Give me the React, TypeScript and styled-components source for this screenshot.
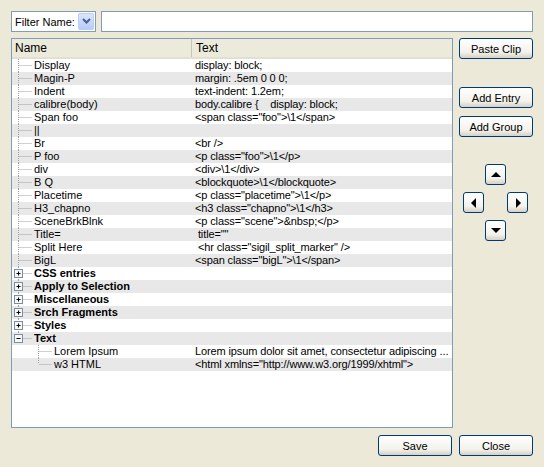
import styled, { createGlobalStyle } from "styled-components";

const GlobalStyle = createGlobalStyle`
  html, body {
    margin: 0;
    padding: 0;
    background: #ece9d8;
  }
  body {
    font-family: "Liberation Sans", Arial, sans-serif;
    font-size: 11px;
    color: #000;
  }
`;

const Page = styled.div`
  width: 544px;
  height: 467px;
  box-sizing: border-box;
  padding: 11px 11px 0 11px;
  display: flex;
  flex-direction: column;
`;

const FilterBar = styled.div`
  display: flex;
  gap: 5px;
  height: 21px;
  margin-bottom: 6px;
`;

const Combo = styled.div`
  width: 85px;
  box-sizing: border-box;
  border: 1px solid #7f9db9;
  background: #fff;
  display: flex;
  align-items: center;
  justify-content: space-between;
  padding: 0 1px 0 3px;
`;

const ComboButton = styled.div`
  width: 16px;
  height: 17px;
  box-sizing: border-box;
  border: 1px solid #b9cdf6;
  border-radius: 2px;
  background: linear-gradient(#dbe6fd, #b6cbf9);
  display: flex;
  align-items: center;
  justify-content: center;
`;

const TextField = styled.input`
  flex: 1;
  box-sizing: border-box;
  border: 1px solid #7f9db9;
  background: #fff;
  outline: none;
  font: inherit;
`;

const Middle = styled.div`
  display: flex;
  gap: 6px;
  height: 390px;
`;

const Tree = styled.div`
  width: 442px;
  box-sizing: border-box;
  border: 1px solid #7f9db9;
  background: #fff;
  display: flex;
  flex-direction: column;
  overflow: hidden;
`;

const Header = styled.div`
  height: 20px;
  display: grid;
  grid-template-columns: 179px 1fr;
  background: #ebeadb;
  border-bottom: 2px solid #e2e0d0;
  box-sizing: border-box;
`;

const HeadCell = styled.div<{ $divider?: boolean }>`
  display: flex;
  align-items: center;
  padding-left: ${({ $divider }) => ($divider ? "4px" : "3px")};
  border-left: ${({ $divider }) => ($divider ? "1px solid #c7c5b2" : "none")};
  font-size: 12px;
`;

const Row = styled.div<{ $shade: boolean }>`
  height: 13px;
  display: grid;
  grid-template-columns: 179px 1fr;
  background: ${({ $shade }) => ($shade ? "#e8e8e8" : "#fff")};
  line-height: 13px;
  white-space: pre;
`;

const NameCell = styled.div<{ $bold?: boolean }>`
  display: flex;
  align-items: center;
  font-weight: ${({ $bold }) => ($bold ? "bold" : "normal")};
  overflow: hidden;
`;

const ValueCell = styled.div`
  padding-left: 4px;
  letter-spacing: -0.12px;
  overflow: hidden;
`;

const Side = styled.div`
  width: 74px;
  display: flex;
  flex-direction: column;
`;

const Button = styled.button<{ $gap?: number }>`
  width: 74px;
  height: 21px;
  margin-top: ${({ $gap }) => $gap ?? 0}px;
  box-sizing: border-box;
  border: 1px solid #003c74;
  border-radius: 3px;
  background: linear-gradient(#ffffff, #f3f2ec 70%, #d6d0c5);
  font-family: "Liberation Sans", Arial, sans-serif;
  font-size: 11px;
  color: #000;
  padding: 0;
`;

const Pad = styled.div`
  margin: 27px 0 0 4px;
  display: grid;
  grid-template-columns: 21px 21px 21px;
  grid-template-rows: 21px 21px 21px;
  column-gap: 1px;
  row-gap: 7px;
`;

const ArrowButton = styled.button<{ $col: number; $row: number }>`
  grid-column: ${({ $col }) => $col};
  grid-row: ${({ $row }) => $row};
  box-sizing: border-box;
  border: 1px solid #003c74;
  border-radius: 3px;
  background: linear-gradient(#ffffff, #f3f2ec 70%, #d6d0c5);
  padding: 0;
  display: flex;
  align-items: center;
  justify-content: center;
`;

const Footer = styled.div`
  display: flex;
  justify-content: flex-end;
  gap: 7px;
  margin-top: 7px;
`;

type Node = {
  name: string;
  text?: string;
  level: 0 | 1;
  group?: "plus" | "minus";
  last?: boolean;
};

const nodes: Node[] = [
  { name: "Display", text: "display: block;", level: 0 },
  { name: "Magin-P", text: "margin: .5em 0 0 0;", level: 0 },
  { name: "Indent", text: "text-indent: 1.2em;", level: 0 },
  { name: "calibre(body)", text: "body.calibre {    display: block;", level: 0 },
  { name: "Span foo", text: '<span class="foo">\\1</span>', level: 0 },
  { name: "||", text: "", level: 0 },
  { name: "Br", text: "<br />", level: 0 },
  { name: "P foo", text: '<p class="foo">\\1</p>', level: 0 },
  { name: "div", text: "<div>\\1</div>", level: 0 },
  { name: "B Q", text: "<blockquote>\\1</blockquote>", level: 0 },
  { name: "Placetime", text: '<p class="placetime">\\1</p>', level: 0 },
  { name: "H3_chapno", text: '<h3 class="chapno">\\1</h3>', level: 0 },
  { name: "SceneBrkBlnk", text: '<p class="scene">&nbsp;</p>', level: 0 },
  { name: "Title=", text: ' title=""', level: 0 },
  { name: "Split Here", text: ' <hr class="sigil_split_marker" />', level: 0 },
  { name: "BigL", text: '<span class="bigL">\\1</span>', level: 0 },
  { name: "CSS entries", level: 0, group: "plus" },
  { name: "Apply to Selection", level: 0, group: "plus" },
  { name: "Miscellaneous", level: 0, group: "plus" },
  { name: "Srch Fragments", level: 0, group: "plus" },
  { name: "Styles", level: 0, group: "plus" },
  { name: "Text", level: 0, group: "minus", last: true },
  {
    name: "Lorem Ipsum",
    text: "Lorem ipsum dolor sit amet, consectetur adipiscing ...",
    level: 1,
  },
  { name: "w3 HTML", text: '<html xmlns="http://www.w3.org/1999/xhtml">', level: 1, last: true },
];

const dot = { stroke: "#a0a0a0", strokeWidth: 1, strokeDasharray: "1 1" };

// dotted tree guides, drawn per row
const Guide = ({ node }: { node: Node }) => {
  const w = node.level === 0 ? 22 : 42;
  const x = node.level === 0 ? 6.5 : 26.5;
  return (
    <svg width={w} height={13} style={{ flex: "none" }}>
      <line x1={x} y1={0} x2={x} y2={node.last ? 6 : 13} {...dot} />
      <line x1={x + 1} y1={6.5} x2={w - 2} y2={6.5} {...dot} />
      {node.group && (
        <g>
          <rect x={2.5} y={2.5} width={8} height={8} fill="#f7f7f4" stroke="#7a8ea8" />
          <line x1={4.5} y1={6.5} x2={8.5} y2={6.5} stroke="#000" />
          {node.group === "plus" && <line x1={6.5} y1={4.5} x2={6.5} y2={8.5} stroke="#000" />}
        </g>
      )}
    </svg>
  );
};

const Arrow = ({ dir }: { dir: "up" | "down" | "left" | "right" }) => {
  const pts = {
    up: "1,8 11,8 6,3",
    down: "1,3 11,3 6,8",
    left: "8,1 8,11 3,6",
    right: "4,1 4,11 9,6",
  }[dir];
  return (
    <svg width={12} height={12}>
      <polygon points={pts} fill="#000" />
    </svg>
  );
};

export default function App() {
  return (
    <>
      <GlobalStyle />
      <Page>
        <FilterBar>
          <Combo>
            <span>Filter Name:</span>
            <ComboButton>
              <svg width={9} height={7}>
                <polyline points="1,1 4.5,4.5 8,1" fill="none" stroke="#4d6185" strokeWidth={2} />
              </svg>
            </ComboButton>
          </Combo>
          <TextField />
        </FilterBar>
        <Middle>
          <Tree>
            <Header>
              <HeadCell>Name</HeadCell>
              <HeadCell $divider>Text</HeadCell>
            </Header>
            {nodes.map((n, i) => (
              <Row key={n.name} $shade={i % 2 === 1}>
                <NameCell $bold={!!n.group}>
                  <Guide node={n} />
                  {n.name}
                </NameCell>
                <ValueCell>{n.text}</ValueCell>
              </Row>
            ))}
          </Tree>
          <Side>
            <Button>Paste Clip</Button>
            <Button $gap={28}>Add Entry</Button>
            <Button $gap={8}>Add Group</Button>
            <Pad>
              <ArrowButton $col={2} $row={1}>
                <Arrow dir="up" />
              </ArrowButton>
              <ArrowButton $col={1} $row={2}>
                <Arrow dir="left" />
              </ArrowButton>
              <ArrowButton $col={3} $row={2}>
                <Arrow dir="right" />
              </ArrowButton>
              <ArrowButton $col={2} $row={3}>
                <Arrow dir="down" />
              </ArrowButton>
            </Pad>
          </Side>
        </Middle>
        <Footer>
          <Button>Save</Button>
          <Button>Close</Button>
        </Footer>
      </Page>
    </>
  );
}
